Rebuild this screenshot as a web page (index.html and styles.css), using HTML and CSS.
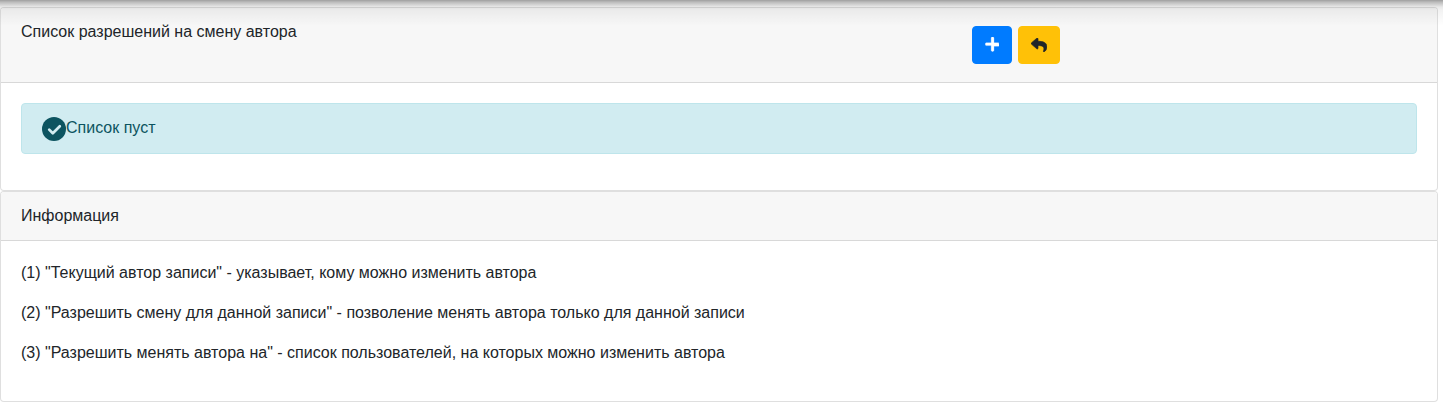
FILE: index.html
```html
<!DOCTYPE html>
<html lang="ru">
<head>
<meta charset="utf-8">
<title>Список разрешений на смену автора</title>
<link rel="stylesheet" href="styles.css">
</head>
<body>
<div class="top-shade"></div>
<main class="page">
  <section class="card">
    <header class="card-header">
      <div class="row">
        <div class="title-col">Список разрешений на смену автора</div>
        <div class="actions-col">
          <button class="btn btn-primary" type="button" aria-label="Добавить">
            <svg class="icon icon-plus" viewBox="32 40 384 432"><path fill="currentColor" stroke="currentColor" stroke-width="8" d="M416 208H280V72c0-17.67-14.33-32-32-32h-16c-17.67 0-32 14.33-32 32v136H64c-17.67 0-32 14.33-32 32v16c0 17.67 14.33 32 32 32h136v136c0 17.67 14.33 32 32 32h16c17.67 0 32-14.33 32-32V304h136c17.67 0 32-14.33 32-32v-16c0-17.67-14.33-32-32-32z"/></svg>
          </button>
          <button class="btn btn-warning" type="button" aria-label="Назад">
            <svg class="icon icon-reply" viewBox="0 30 512 452"><path fill="currentColor" stroke="currentColor" stroke-width="22" d="M8.309 189.836L184.313 37.851C199.719 24.546 224 35.347 224 56.015v80.053c160.629 1.839 288 34.032 288 186.258 0 61.441-39.581 122.309-83.333 154.132-13.653 9.931-33.111-2.533-28.077-18.631 45.344-145.012-21.507-183.51-176.59-185.742V360c0 20.7-24.3 31.453-39.687 18.164l-176.004-152c-11.071-9.562-11.086-26.753 0-36.328z"/></svg>
          </button>
        </div>
      </div>
    </header>
    <div class="card-body">
      <div class="alert">
        <svg class="icon-check" viewBox="0 0 24 24"><circle cx="12" cy="12" r="12" fill="currentColor"/><path d="M7.2 12.6l3.6 3.7 7-7" fill="none" stroke="#d1ecf1" stroke-width="2.7" stroke-linecap="round" stroke-linejoin="round"/></svg><span>Список пуст</span>
      </div>
    </div>
  </section>
  <section class="card">
    <header class="card-header">Информация</header>
    <div class="card-body">
      <p>(1) "Текущий автор записи" - указывает, кому можно изменить автора</p>
      <p>(2) "Разрешить смену для данной записи" - позволение менять автора только для данной записи</p>
      <p>(3) "Разрешить менять автора на" - список пользователей, на которых можно изменить автора</p>
    </div>
  </section>
</main>
</body>
</html>
```
FILE: styles.css
```css
* { box-sizing: border-box; }
html, body { margin: 0; padding: 0; }
body {
  background: #fff;
  color: #212529;
  font-family: "Liberation Sans", Arial, sans-serif;
  font-size: 16px;
  line-height: 24px;
  overflow: hidden;
}
.top-shade {
  position: relative;
  height: 7px;
}
.top-shade::after {
  content: "";
  position: absolute;
  top: 0;
  left: 0;
  right: 0;
  height: 26px;
  pointer-events: none;
  background: linear-gradient(to bottom,
    rgba(0, 0, 0, .38) 0,
    rgba(0, 0, 0, .27) 2px,
    rgba(0, 0, 0, .16) 5px,
    rgba(0, 0, 0, .09) 7px,
    rgba(0, 0, 0, .05) 10px,
    rgba(0, 0, 0, 0) 26px);
}
.page { margin-right: 5px; }
.card {
  background: #fff;
  border: 1px solid rgba(0, 0, 0, .125);
  border-radius: 4px;
  overflow: hidden;
}
.card-header {
  padding: 12px 20px;
  background: #f7f7f7;
  border-bottom: 1px solid rgba(0, 0, 0, .125);
}
.row {
  display: flex;
  margin: 0 -15px;
}
.title-col {
  flex: 0 0 66.6667%;
  padding: 0 15px;
}
.actions-col {
  display: flex;
  gap: 6px;
  margin: 6px 0;
  padding: 0 15px;
}
.card-body { padding: 20px; }
.btn {
  display: flex;
  align-items: center;
  justify-content: center;
  height: 38px;
  padding: 0 12px 2px;
  border: 1px solid transparent;
  border-radius: 4px;
  font: inherit;
}
.btn-primary { background: #007bff; border-color: #007bff; color: #fff; }
.btn-warning { background: #ffc107; border-color: #ffc107; color: #212529; }
.icon { display: block; flex: none; }
.icon-plus { width: 14px; height: 15px; }
.icon-reply { width: 16px; height: 14px; margin-top: 1px; }
.alert {
  display: flex;
  align-items: flex-start;
  margin-bottom: 16px;
  padding: 12px 20px;
  min-height: 51px;
  color: #0c5460;
  background: #d1ecf1;
  border: 1px solid #bee5eb;
  border-radius: 4px;
}
.icon-check {
  display: block;
  width: 24px;
  height: 24px;
  flex: none;
  margin-top: 1px;
}
p { margin: 0 0 16px; }
```
